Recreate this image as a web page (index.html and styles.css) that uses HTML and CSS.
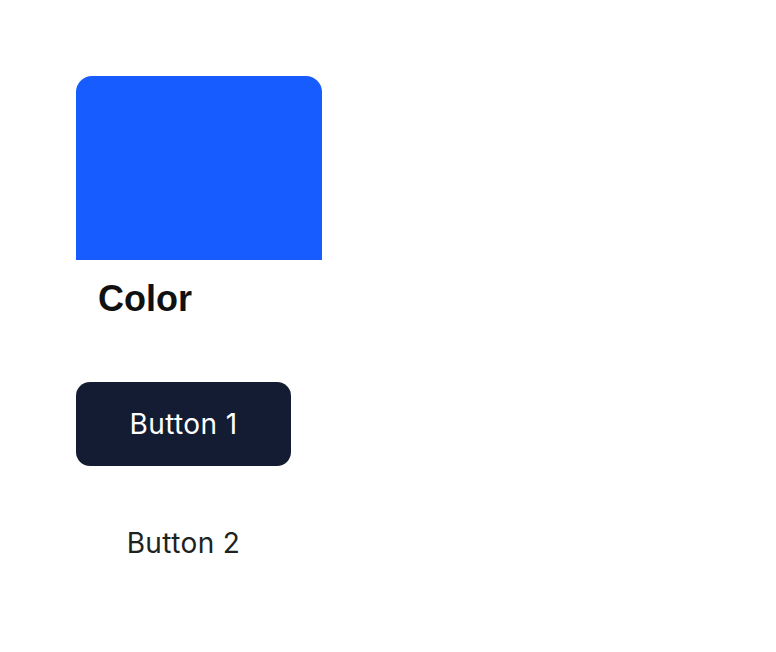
FILE: index.html
```html
<!DOCTYPE html>
<html>
<head>
<meta charset="utf-8">
<link rel="stylesheet" href="styles.css">
</head>
<body>
<main class="page">
  <section class="card">
    <div class="swatch"></div>
    <h2 class="card-title">Color</h2>
  </section>
  <div class="buttons">
    <button class="btn btn-primary">Button 1</button>
    <button class="btn btn-ghost">Button 2</button>
  </div>
</main>
</body>
</html>
```

FILE: styles.css
```css
html, body {
  margin: 0;
  padding: 0;
  background: #ffffff;
}
.page {
  padding: 76px;
  display: flex;
  flex-direction: column;
  align-items: flex-start;
}
.card {
  width: 246px;
}
.swatch {
  height: 184px;
  background: #175cff;
  border-radius: 16px 16px 0 0;
}
.card-title {
  margin: 0;
  padding: 19px 22px 0;
  font-family: "Liberation Sans", Arial, sans-serif;
  font-weight: 700;
  font-size: 36px;
  line-height: 40px;
  color: #111111;
}
.buttons {
  margin-top: 63px;
  display: flex;
  flex-direction: column;
  gap: 35px;
}
.btn {
  width: 215px;
  height: 84px;
  border: none;
  border-radius: 14px;
  font-family: Inter, sans-serif;
  font-size: 28px;
  letter-spacing: 0.4px;
  cursor: pointer;
}
.btn-primary {
  background: #141c33;
  color: #ffffff;
}
.btn-ghost {
  background: transparent;
  color: #1c2320;
}
```
